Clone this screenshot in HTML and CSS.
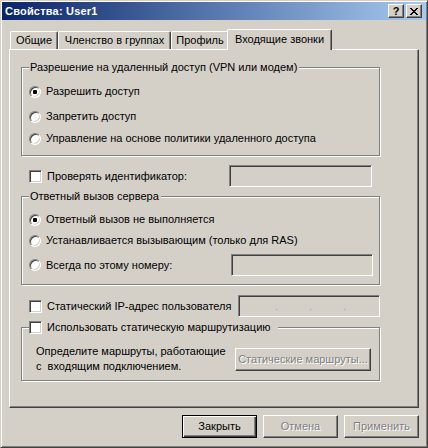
FILE: index.html
```html
<!DOCTYPE html>
<html lang="ru">
<head>
    <meta charset="UTF-8">
    <title>Свойства: User1</title>
    <link rel="stylesheet" href="styles.css">
</head>
<body>

    <div class="window">
        <div class="titlebar">
            <span class="title">Свойства: User1</span>
            <span class="caption_btns">
                <span class="cbtn">?</span>
                <span class="cbtn">
                    <svg width="8" height="7" viewBox="0 0 8 7"><path d="M0 0h2v1h-2z M6 0h2v1h-2z M1 1h2v1h-2z M5 1h2v1h-2z M2 2h4v1h-4z M3 3h2v1h-2z M2 4h4v1h-4z M1 5h2v1h-2z M5 5h2v1h-2z M0 6h2v1h-2z M6 6h2v1h-2z" fill="#000"/></svg>
                </span>
            </span>
        </div>

        <div class="body">
            <div class="tabs">
                <span class="tab tab_general">Общие</span>
                <span class="tab tab_groups">Членство в группах</span>
                <span class="tab tab_profile">Профиль</span>
                <span class="tab tab_dialin active">Входящие звонки</span>
            </div>

            <div class="sheet">
                <!-- remote access permission -->
                <fieldset class="group group_access">
                    <legend>Разрешение на удаленный доступ (VPN или модем)</legend>
                    <div class="opt row1"><span class="radio on"></span>Разрешить доступ</div>
                    <div class="opt row2"><span class="radio"></span>Запретить доступ</div>
                    <div class="opt row3"><span class="radio"></span>Управление на основе политики удаленного доступа</div>
                </fieldset>

                <div class="line line_ident">
                    <div class="opt label_ident"><span class="check"></span>Проверять идентификатор:</div>
                    <span class="edit edit_ident"></span>
                </div>

                <!-- callback -->
                <fieldset class="group group_callback">
                    <legend>Ответный вызов сервера</legend>
                    <div class="opt row1"><span class="radio on"></span>Ответный вызов не выполняется</div>
                    <div class="opt row2"><span class="radio"></span>Устанавливается вызывающим (только для RAS)</div>
                    <div class="line line_number">
                        <div class="opt label_number"><span class="radio"></span>Всегда по этому номеру:</div>
                        <span class="edit edit_number"></span>
                    </div>
                </fieldset>

                <div class="line line_ip">
                    <div class="opt label_ip"><span class="check"></span>Статический IP-адрес пользователя</div>
                    <span class="edit edit_ip">
                        <span></span><span class="dot">.</span><span></span><span class="dot">.</span><span></span><span class="dot">.</span><span></span>
                    </span>
                </div>

                <!-- static routes -->
                <fieldset class="group group_routes">
                    <legend><span class="opt"><span class="check"></span>Использовать статическую маршрутизацию</span></legend>
                    <div class="routes">
                        <p class="routes_text">Определите маршруты, работающие<br>с&nbsp; входящим подключением.</p>
                        <span class="btn disabled btn_routes">Статические маршруты...</span>
                    </div>
                </fieldset>
            </div>

            <div class="buttons">
                <span class="btn default">Закрыть</span>
                <span class="btn disabled">Отмена</span>
                <span class="btn disabled">Применить</span>
            </div>
        </div>
    </div>

</body>
</html>
```

FILE: styles.css
```css
* {
    box-sizing: border-box;
}
body {
    margin: 0;
    background: #d4d0c8;
    font: 11px/13px "Liberation Sans", Arial, sans-serif;
    color: #000;
}
.window {
    width: 428px;
    height: 448px;
    padding: 1px;
    border: 1px solid;
    border-color: #d4d0c8 #404040 #404040 #d4d0c8;
    box-shadow: inset 1px 1px #fff, inset -1px -1px #808080;
    background: #d4d0c8;
}
.titlebar {
    height: 18px;
    display: flex;
    align-items: center;
    justify-content: space-between;
    padding: 0 4px 0 3px;
    background: linear-gradient(to right, #0a246a, #a6caf0);
    color: #fff;
    font-weight: bold;
}
.title {
    letter-spacing: 0.2px;
}
.caption_btns {
    display: flex;
    gap: 2px;
}
.cbtn {
    width: 16px;
    height: 14px;
    display: flex;
    align-items: center;
    justify-content: center;
    border: 1px solid;
    border-color: #fff #404040 #404040 #fff;
    box-shadow: inset -1px -1px #808080;
    background: #d4d0c8;
    color: #000;
    font-weight: bold;
    font-size: 11px;
}
.body {
    padding: 9px 7px 0;
}

/* tabs */
.tabs {
    display: flex;
    align-items: flex-end;
    height: 20px;
    padding-left: 1px;
    position: relative;
    z-index: 1;
}
.tab {
    height: 18px;
    line-height: 17px;
    text-align: center;
    border: 1px solid;
    border-color: #fff #404040 transparent #fff;
    border-bottom: none;
    border-radius: 2px 2px 0 0;
    box-shadow: inset -1px 0 #808080;
    background: #d4d0c8;
    white-space: nowrap;
}
.tab_general { width: 48px; }
.tab_groups { width: 113px; }
.tab_profile { width: 58px; }
.tab.active {
    width: 105px;
    height: 21px;
    line-height: 18px;
    margin: 0 -2px -1px -2px;
    position: relative;
}

.sheet {
    height: 359px;
    border: 1px solid;
    border-color: #fff #404040 #404040 #fff;
    box-shadow: inset -1px -1px #808080;
    padding-left: 11px;
}

/* group boxes */
.group {
    width: 359px;
    margin: 0;
    padding: 0 0 0 7px;
    min-width: 0;
    border: 1px solid #808080;
    box-shadow: 1px 1px 0 #fff, inset 1px 1px 0 #fff;
}
.group legend {
    padding: 0 2px 0 1px;
    line-height: 13px;
    background: #d4d0c8;
}
.group_access {
    margin-top: 11px;
    padding-bottom: 10px;
}
.group_access .row1 { margin-top: 11px; }
.group_access .row2 { margin-top: 12px; }
.group_access .row3 { margin-top: 9px; }

.group_callback {
    margin-top: 3px;
    padding-bottom: 8px;
}
.group_callback .row1 { margin-top: 10px; }
.group_callback .row2 { margin-top: 8px; }

.group_routes {
    margin-top: 4px;
    padding-bottom: 6px;
}
.group_routes legend {
    padding: 0 7px 0 0;
}

/* option rows */
.opt {
    display: flex;
    align-items: center;
    gap: 5px;
    height: 13px;
    white-space: nowrap;
}
.radio {
    position: relative;
    width: 12px;
    height: 12px;
    flex: none;
    border-radius: 50%;
    border: 1px solid;
    border-color: #808080 #fff #fff #808080;
    box-shadow: inset 1px 1px #404040, inset -1px -1px #d4d0c8;
    background: #fff;
}
.radio.on::after {
    content: "";
    position: absolute;
    left: 3px;
    top: 3px;
    width: 4px;
    height: 4px;
    border-radius: 1px;
    background: #000;
}
.check {
    width: 13px;
    height: 13px;
    flex: none;
    border: 1px solid;
    border-color: #808080 #fff #fff #808080;
    box-shadow: inset 1px 1px #404040, inset -1px -1px #d4d0c8;
    background: #fff;
}

.line {
    display: flex;
    align-items: center;
    height: 22px;
}
.line_ident {
    margin-top: 9px;
    padding-left: 8px;
}
.label_ident { width: 200px; }
.edit_ident { width: 143px; }

.line_number { margin-top: 7px; }
.label_number { width: 202px; }
.edit_number { width: 142px; }

.line_ip {
    margin-top: 10px;
    padding-left: 8px;
}
.label_ip { width: 209px; }

.edit {
    height: 22px;
    border: 1px solid;
    border-color: #808080 #fff #fff #808080;
    box-shadow: inset 1px 1px #404040, inset -1px -1px #d4d0c8;
    background: #d4d0c8;
}
.edit_ip {
    width: 142px;
    display: grid;
    grid-template-columns: 1fr auto 1fr auto 1fr auto 1fr;
    align-items: center;
    padding: 0 2px 0 5px;
    color: #a0a0a0;
}

.routes {
    display: flex;
    align-items: flex-start;
    padding-left: 7px;
}
.routes_text {
    margin: 10px 0 0;
    width: 199px;
    line-height: 15px;
    white-space: nowrap;
}

/* push buttons */
.btn {
    display: block;
    width: 75px;
    height: 23px;
    line-height: 21px;
    text-align: center;
    white-space: nowrap;
    border: 1px solid;
    border-color: #fff #404040 #404040 #fff;
    box-shadow: inset -1px -1px #808080;
}
.btn.default {
    border-color: #000;
    box-shadow: inset 1px 1px #fff, inset -1px -1px #404040, inset -2px -2px #808080;
}
.btn.disabled {
    color: #808080;
    text-shadow: 1px 1px #fff;
}
.btn_routes {
    width: 136px;
    margin-top: 14px;
}
.buttons {
    display: flex;
    justify-content: flex-end;
    gap: 6px;
    margin-top: 7px;
}
```
